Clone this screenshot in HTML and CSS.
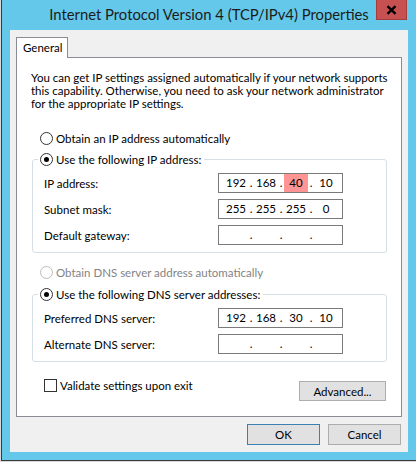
FILE: index.html
```html
<!DOCTYPE html>
<html>
<head>
<meta charset="utf-8">
<title>Internet Protocol Version 4 (TCP/IPv4) Properties</title>
<link rel="stylesheet" href="styles.css">
</head>
<body>
<div class="screen">
  <div class="window">
    <div class="titlebar">
      <span class="title">Internet Protocol Version 4 (TCP/IPv4) Properties</span>
      <div class="close">
        <svg width="11" height="10" viewBox="0 0 11 10"><path d="M1.5 1.2 L9.5 8.8 M9.5 1.2 L1.5 8.8" stroke="#000" stroke-width="2.4" fill="none"/></svg>
      </div>
    </div>
    <div class="client">
      <div class="tabs"><div class="tab">General</div></div>
      <div class="panel">
        <p class="intro"><span class="line">You can get IP settings assigned automatically if your network supports</span><span class="line">this capability. Otherwise, you need to ask your network administrator</span><span class="line">for the appropriate IP settings.</span></p>
        <div class="option first"><span class="radio"></span><span>Obtain an IP address automatically</span></div>
        <div class="group">
          <div class="option legend"><span class="radio checked"></span><span>Use the following IP address:</span></div>
          <div class="field-row"><span class="field-label">IP address:</span><div class="ipbox"><span class="oct">192</span><span class="dot">.</span><span class="oct">168</span><span class="dot">.</span><span class="oct sel">40</span><span class="dot">.</span><span class="oct">10</span></div></div>
          <div class="field-row"><span class="field-label">Subnet mask:</span><div class="ipbox"><span class="oct">255</span><span class="dot">.</span><span class="oct">255</span><span class="dot">.</span><span class="oct">255</span><span class="dot">.</span><span class="oct">0</span></div></div>
          <div class="field-row"><span class="field-label">Default gateway:</span><div class="ipbox"><span class="oct"></span><span class="dot">.</span><span class="oct"></span><span class="dot">.</span><span class="oct"></span><span class="dot">.</span><span class="oct"></span></div></div>
        </div>
        <div class="option disabled dns-auto"><span class="radio"></span><span>Obtain DNS server address automatically</span></div>
        <div class="group dns">
          <div class="option legend"><span class="radio checked"></span><span>Use the following DNS server addresses:</span></div>
          <div class="field-row"><span class="field-label">Preferred DNS server:</span><div class="ipbox"><span class="oct">192</span><span class="dot">.</span><span class="oct">168</span><span class="dot">.</span><span class="oct">30</span><span class="dot">.</span><span class="oct">10</span></div></div>
          <div class="field-row"><span class="field-label">Alternate DNS server:</span><div class="ipbox"><span class="oct"></span><span class="dot">.</span><span class="oct"></span><span class="dot">.</span><span class="oct"></span><span class="dot">.</span><span class="oct"></span></div></div>
        </div>
        <div class="bottom-row">
          <div class="option check-opt"><span class="checkbox"></span><span>Validate settings upon exit</span></div>
          <button class="btn advanced">Advanced...</button>
        </div>
      </div>
      <div class="buttons">
        <button class="btn default">OK</button>
        <button class="btn">Cancel</button>
      </div>
    </div>
  </div>
</div>
</body>
</html>
```
FILE: styles.css
```css
html, body {
  margin: 0;
  padding: 0;
}
body {
  width: 416px;
  height: 462px;
  overflow: hidden;
  background: #d8d8d8;
  font-family: Lato, "Liberation Sans", sans-serif;
  font-size: 11.5px;
  color: #000;
}
.screen {
  padding-left: 1px;
}
.window {
  box-sizing: border-box;
  height: 461px;
  border-left: 1px solid #3a3a3a;
  border-bottom: 1px solid #3a3a3a;
  background: #64c8ea;
  padding: 0 8px 8px 8px;
  display: flex;
  flex-direction: column;
}
.titlebar {
  position: relative;
  height: 30px;
  flex: none;
  display: flex;
  justify-content: center;
}
.title {
  font-size: 14.8px;
  line-height: 28px;
  color: #1c1c1c;
  white-space: nowrap;
}
.close {
  position: absolute;
  top: 0;
  right: 1px;
  width: 31px;
  height: 20px;
  box-sizing: border-box;
  background: #c75050;
  border: 1px solid #a33e3e;
  border-top: none;
  display: flex;
  align-items: center;
  justify-content: center;
}
.client {
  flex: 1;
  background: #f0f0f0;
  padding: 7px 6px 0 6px;
  display: flex;
  flex-direction: column;
}
.tabs {
  display: flex;
  height: 20px;
}
.tab {
  position: relative;
  z-index: 1;
  box-sizing: border-box;
  width: 52px;
  height: 21px;
  border: 1px solid #898c95;
  border-bottom: none;
  background: #fff;
  padding-left: 6px;
  line-height: 19px;
}
.panel {
  box-sizing: border-box;
  height: 360px;
  border: 1px solid #898c95;
  background: #fff;
  padding: 0 14px;
  display: flex;
  flex-direction: column;
}
.intro {
  margin: 13px 0 0;
  display: flex;
  flex-direction: column;
}
.line {
  display: block;
  height: 13px;
  line-height: 13px;
  white-space: nowrap;
}
.option {
  display: flex;
  align-items: center;
  gap: 3px;
  height: 16px;
  white-space: nowrap;
}
.option.first {
  margin: 20px 0 0 9px;
}
.radio {
  flex: none;
  box-sizing: border-box;
  width: 13px;
  height: 13px;
  border: 1px solid #333;
  border-radius: 50%;
  background: #fff;
  display: flex;
  align-items: center;
  justify-content: center;
}
.radio.checked::after {
  content: "";
  width: 5px;
  height: 5px;
  border-radius: 50%;
  background: #000;
}
.option.disabled {
  color: #838383;
}
.option.disabled .radio {
  border-color: #bcbcbc;
}
.dns-auto {
  margin: 11px 0 0 9px;
}
.group {
  margin: 13px 0 0 1px;
  border: 1px solid #d5dfe5;
  border-radius: 3px;
  padding: 0 0 7px 0;
  display: flex;
  flex-direction: column;
}
.group.dns {
  margin-top: 14px;
}
.legend {
  align-self: flex-start;
  margin: -9px 0 0 5px;
  padding: 0 3px 0 2px;
  background: #fff;
}
.field-row {
  display: flex;
  align-items: center;
  margin-top: 6px;
  padding-left: 11px;
}
.field-label {
  width: 174px;
  flex: none;
}
.ipbox {
  box-sizing: border-box;
  width: 125px;
  height: 20px;
  border: 1px solid #7a7a7a;
  padding-left: 5px;
  display: flex;
  line-height: 18px;
}
.oct {
  width: 24px;
  text-align: center;
}
.oct.sel {
  background: #ff9494;
}
.dot {
  width: 6px;
  text-align: center;
}
.bottom-row {
  margin-top: 15px;
  height: 24px;
  display: flex;
  justify-content: space-between;
  padding: 0 1px 0 13px;
}
.check-opt {
  align-self: flex-start;
}
.checkbox {
  flex: none;
  box-sizing: border-box;
  width: 13px;
  height: 13px;
  border: 1px solid #333;
  background: #fff;
}
.btn {
  box-sizing: border-box;
  height: 21px;
  width: 73px;
  padding: 0;
  margin: 0;
  font: inherit;
  color: #000;
  background: #e1e1e1;
  border: 1px solid #adadad;
}
.btn.advanced {
  align-self: flex-end;
  width: 87px;
  height: 20px;
}
.btn.default {
  border-color: #3c7fb1;
}
.buttons {
  display: flex;
  justify-content: flex-end;
  gap: 8px;
  margin-top: 7px;
  padding-right: 1px;
}
```
